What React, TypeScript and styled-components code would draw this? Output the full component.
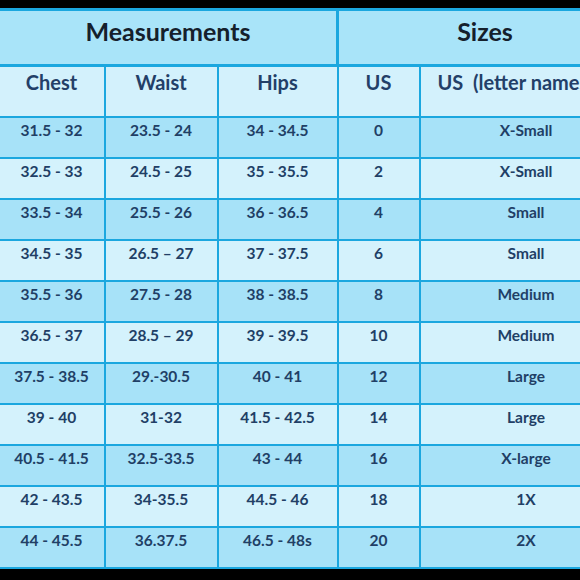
import React from "react";
import styled, { createGlobalStyle } from "styled-components";

const GlobalStyle = createGlobalStyle`
  html, body {
    margin: 0;
    padding: 0;
    background: #000;
    overflow: hidden;
  }
`;

const Page = styled.div`
  width: 580px;
  height: 580px;
  overflow: hidden;
  padding-top: 8px;
  box-sizing: border-box;
  background: #000;
`;

const Table = styled.table`
  border-collapse: collapse;
  table-layout: fixed;
  width: 634px;
  margin-left: -3px;
  font-family: Lato, "Liberation Sans", sans-serif;
  font-weight: 700;
  color: #213f66;
`;

const GroupCell = styled.th`
  height: 48px;
  background: #a9e4f9;
  border: 3px solid #1ba7df;
  font-size: 25px;
  line-height: 30px;
  font-weight: 700;
  color: #15202c;
  vertical-align: top;
  padding: 5px 0 0;
  text-align: center;
`;

const HeadCell = styled.th<{ $left?: boolean }>`
  height: 46px;
  background: #d3f1fc;
  border: 2px solid #1ba7df;
  font-size: 20px;
  line-height: 24px;
  font-weight: 700;
  color: #233f68;
  vertical-align: top;
  padding: 3px 0 0 ${(p) => (p.$left ? "17px" : "0")};
  text-align: ${(p) => (p.$left ? "left" : "center")};
  white-space: nowrap;
  overflow: hidden;
`;

const Cell = styled.td<{ $odd: boolean }>`
  height: 37px;
  background: ${(p) => (p.$odd ? "#a7e2f8" : "#d4f2fc")};
  border: 2px solid #1ba7df;
  font-size: 15.5px;
  line-height: 20px;
  vertical-align: top;
  padding: 2px 0 0;
  text-align: center;
  white-space: nowrap;
`;

const rows: [string, string, string, string, string][] = [
  ["31.5 - 32", "23.5 - 24", "34 - 34.5", "0", "X-Small"],
  ["32.5 - 33", "24.5 - 25", "35 - 35.5", "2", "X-Small"],
  ["33.5 - 34", "25.5 - 26", "36 - 36.5", "4", "Small"],
  ["34.5 - 35", "26.5 \u2013 27", "37 - 37.5", "6", "Small"],
  ["35.5 - 36", "27.5 - 28", "38 - 38.5", "8", "Medium"],
  ["36.5 - 37", "28.5 \u2013 29", "39 - 39.5", "10", "Medium"],
  ["37.5 - 38.5", "29.-30.5", "40 - 41", "12", "Large"],
  ["39 - 40", "31-32", "41.5 - 42.5", "14", "Large"],
  ["40.5 - 41.5", "32.5-33.5", "43 - 44", "16", "X-large"],
  ["42 - 43.5", "34-35.5", "44.5 - 46", "18", "1X"],
  ["44 - 45.5", "36.37.5", "46.5 - 48s", "20", "2X"],
];

export default function App() {
  return (
    <Page>
      <GlobalStyle />
      <Table>
        <colgroup>
          <col style={{ width: 106 }} />
          <col style={{ width: 113 }} />
          <col style={{ width: 120 }} />
          <col style={{ width: 82 }} />
          <col style={{ width: 213 }} />
        </colgroup>
        <thead>
          <tr>
            <GroupCell colSpan={3}>Measurements</GroupCell>
            <GroupCell colSpan={2}>Sizes</GroupCell>
          </tr>
          <tr>
            <HeadCell>Chest</HeadCell>
            <HeadCell>Waist</HeadCell>
            <HeadCell>Hips</HeadCell>
            <HeadCell>US</HeadCell>
            <HeadCell $left>US&nbsp;&nbsp;(letter names)</HeadCell>
          </tr>
        </thead>
        <tbody>
          {rows.map((r, i) => (
            <tr key={i}>
              {r.map((v, j) => (
                <Cell key={j} $odd={i % 2 === 0}>
                  {v}
                </Cell>
              ))}
            </tr>
          ))}
        </tbody>
      </Table>
    </Page>
  );
}
